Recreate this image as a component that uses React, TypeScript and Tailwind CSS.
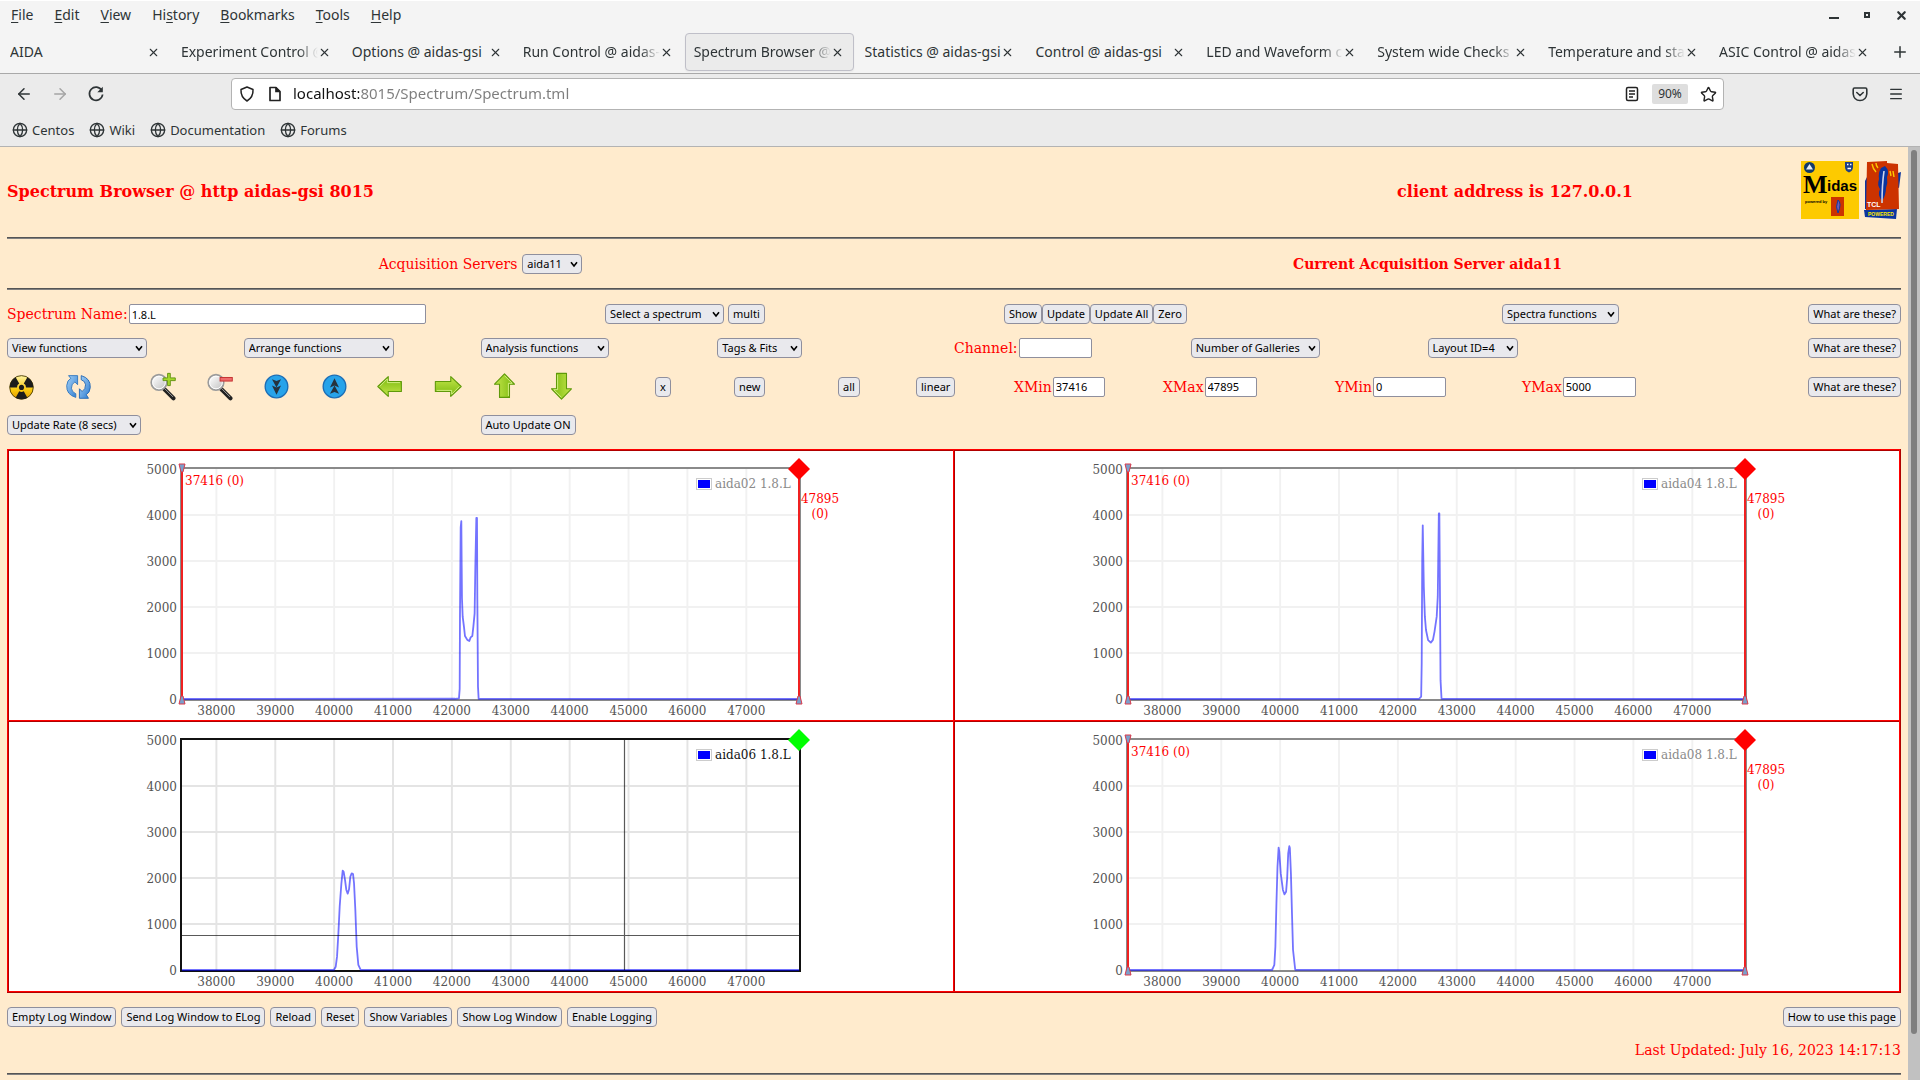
import type { ReactNode } from 'react'
import { ArrowLeft, ArrowRight, Globe, Menu, Plus, Star, X } from 'lucide-react'

const MENUS = ['File', 'Edit', 'View', 'History', 'Bookmarks', 'Tools', 'Help']

const TABS = [
  { title: 'AIDA' },
  { title: 'Experiment Control @', fade: true },
  { title: 'Options @ aidas-gsi' },
  { title: 'Run Control @ aidas-', fade: true },
  { title: 'Spectrum Browser @', fade: true, active: true },
  { title: 'Statistics @ aidas-gsi' },
  { title: 'Control @ aidas-gsi' },
  { title: 'LED and Waveform c', fade: true },
  { title: 'System wide Checks', fade: true },
  { title: 'Temperature and stat', fade: true },
  { title: 'ASIC Control @ aidas', fade: true },
]

const BOOKMARKS = ['Centos', 'Wiki', 'Documentation', 'Forums']

const LOG_BUTTONS = [
  'Empty Log Window',
  'Send Log Window to ELog',
  'Reload',
  'Reset',
  'Show Variables',
  'Show Log Window',
  'Enable Logging',
]

type Spectrum = { name: string; active?: boolean; points: [number, number][] }

const SPECTRA: Spectrum[] = [
  {
    name: 'aida02 1.8.L',
    points: [
      [42052, 5], [42120, 15], [42132, 220], [42137, 1775], [42149, 3730], [42160, 3865], [42166, 2905],
      [42171, 2190], [42183, 1790], [42205, 1570], [42222, 1370], [42262, 1285], [42296, 1260], [42318, 1340],
      [42347, 1370], [42364, 1570], [42386, 1860], [42398, 2880], [42415, 3935], [42426, 3935], [42432, 2170],
      [42443, 270], [42454, 5],
    ],
  },
  {
    name: 'aida04 1.8.L',
    points: [
      [42359, 5], [42395, 50], [42404, 760], [42413, 3020], [42422, 3775], [42440, 2440], [42458, 1790],
      [42477, 1500], [42513, 1280], [42559, 1225], [42595, 1285], [42622, 1465], [42659, 1790], [42677, 2225],
      [42695, 4035], [42704, 4035], [42715, 2190], [42724, 410], [42741, 5],
    ],
  },
  {
    name: 'aida06 1.8.L',
    active: true,
    points: [
      [39998, 5], [40026, 70], [40049, 290], [40072, 800], [40094, 1375], [40123, 1880], [40145, 2160],
      [40162, 2135], [40185, 1955], [40207, 1740], [40230, 1660], [40253, 1755], [40275, 2030], [40298, 2100],
      [40321, 2085], [40338, 1880], [40360, 1305], [40383, 505], [40411, 110], [40451, 5],
    ],
  },
  {
    name: 'aida08 1.8.L',
    points: [
      [39865, 5], [39901, 110], [39919, 505], [39937, 1450], [39955, 2245], [39974, 2660], [39985, 2580],
      [40010, 2100], [40047, 1740], [40074, 1645], [40101, 1700], [40119, 1990], [40137, 2535], [40156, 2690],
      [40165, 2650], [40183, 2100], [40201, 1230], [40219, 435], [40256, 5],
    ],
  },
]

const X_TICKS = [38000, 39000, 40000, 41000, 42000, 43000, 44000, 45000, 46000, 47000]
const Y_TICKS = [0, 1000, 2000, 3000, 4000, 5000]
const XMIN = 37416
const XMAX = 47895

const px = (channel: number) => 61 + ((channel - XMIN) / (XMAX - XMIN)) * 617
const py = (count: number) => 248 - (count / 1000) * 46

function Button({ children }: { children: ReactNode }) {
  return (
    <button className="h-5 shrink-0 rounded border border-[#8f8f9d] bg-[#e9e9ed] px-1 text-[11px] leading-4 whitespace-nowrap text-black">
      {children}
    </button>
  )
}

function Select({ label, width }: { label: string; width: string }) {
  return (
    <span className={`relative inline-block h-5 shrink-0 ${width}`}>
      <select
        aria-label={label}
        className="block h-5 w-full appearance-none rounded border border-[#8f8f9d] bg-[#e9e9ed] pl-1 text-[11px] leading-4 text-black"
      >
        <option>{label}</option>
      </select>
      <svg viewBox="0 0 8 8" className="pointer-events-none absolute top-1.5 right-1 size-2" fill="none" stroke="#000" strokeWidth="1.6">
        <path d="M1 2.2 4 6 7 2.2" />
      </svg>
    </span>
  )
}

function Field({ id, label, value, width }: { id: string; label: string; value: string; width: string }) {
  return (
    <div className="flex items-center gap-px">
      <label htmlFor={id} className="whitespace-nowrap">{label}</label>
      <input
        id={id}
        defaultValue={value}
        className={`h-5 rounded-xs border border-[#8f8f9d] bg-white px-0.5 text-[11px] text-black ${width}`}
      />
    </div>
  )
}

function Rule() {
  return <hr className="h-0.5 border-t border-b border-t-[#555] border-b-[#808080]" />
}

function IconButton({ label, children }: { label: string; children: ReactNode }) {
  return (
    <button aria-label={label} className="block size-[29px]">
      <svg viewBox="0 0 32 32" className="size-full">{children}</svg>
    </button>
  )
}

function GreenArrow({ turn, long }: { turn: number; long?: boolean }) {
  const end = long ? 30.5 : 28
  return (
    <g transform={`rotate(${turn} 16 16)`}>
      <path d={`M16 2 27 13.500H21.500V${end}H10.500V13.500H5Z`} fill="url(#green)" stroke="#5f9a0a" strokeWidth="1.200" strokeLinejoin="round" />
      <path d={`M16 4 24.500 12.500H20.300V${end - 1.5}`} fill="none" stroke="#d6f28a" strokeWidth="1" />
    </g>
  )
}

function Magnifier() {
  return (
    <>
      <path d="M17 19 27 29" stroke="#222" strokeWidth="4.500" strokeLinecap="round" />
      <path d="M17.500 18.500 26.500 27.500" stroke="#aaa" strokeWidth="1" />
      <circle cx="11" cy="11.500" r="8.500" fill="#ececec" stroke="#9b9b9b" strokeWidth="2" />
      <circle cx="11" cy="11.500" r="7" fill="url(#lens)" stroke="#fff" strokeWidth="1" />
    </>
  )
}

function Gradients() {
  return (
    <svg className="absolute size-0" aria-hidden="true">
      <defs>
        <linearGradient id="green" x1="0" x2="1" y1="0" y2="0">
          <stop offset="0" stopColor="#c4e64b" />
          <stop offset="1" stopColor="#79b80c" />
        </linearGradient>
        <linearGradient id="lens" x1="0" x2="1" y1="0" y2="1">
          <stop offset="0" stopColor="#fff" />
          <stop offset="1" stopColor="#c4c4c4" />
        </linearGradient>
        <linearGradient id="refresh" x1="0" x2="1" y1="0" y2="1">
          <stop offset="0" stopColor="#a9d4f7" />
          <stop offset="1" stopColor="#2a7ad0" />
        </linearGradient>
        <linearGradient id="hazard" x1="0" x2="0" y1="0" y2="1">
          <stop offset="0" stopColor="#fff3a0" />
          <stop offset="0.600" stopColor="#f9c80e" />
          <stop offset="1" stopColor="#e09a00" />
        </linearGradient>
      </defs>
    </svg>
  )
}

function Marker({ x, y, down }: { x: number; y: number; down?: boolean }) {
  const d = down ? 'M-3 -4H3L1 4H-1Z' : 'M-3 4H3L1 -4H-1Z'
  return <path d={d} transform={`translate(${x} ${y})`} fill="#7aa0cc" stroke="#d93a4a" strokeWidth="1" />
}

function Plot({ name, active, points }: Spectrum) {
  const line = [[XMIN, 0], ...points, [XMAX, 0]].map(([c, n]) => `${px(c)},${py(n)}`).join(' ')
  const frame = active ? '#111' : '#8a8a8a'
  return (
    <svg viewBox="0 0 720 269" className="mx-auto block w-[720px] font-['DejaVu_Serif',serif] text-xs">
      <g stroke="#000" strokeWidth="2" opacity={active ? 0.1 : 0.05}>
        {X_TICKS.map((t) => <path key={t} d={`M${px(t)} 18V248`} />)}
        {Y_TICKS.slice(1, 5).map((t) => <path key={t} d={`M61 ${py(t)}H678`} />)}
      </g>
      <rect x="60" y="17" width="619" height="232" fill="none" stroke={frame} strokeWidth="2" />
      <polyline points={line} fill="none" stroke="#0000ff" strokeOpacity="0.55" strokeWidth="1.800" strokeLinejoin="round" />

      <g fill="#545454" textAnchor="end">
        {Y_TICKS.map((t) => <text key={t} x="56" y={py(t) + 5}>{t}</text>)}
      </g>
      <g fill="#545454" textAnchor="middle">
        {X_TICKS.map((t) => <text key={t} x={px(t)} y="264">{t}</text>)}
      </g>

      <rect x="575.500" y="27.500" width="15" height="11" fill="#fff" stroke="#ccc" />
      <rect x="577" y="29" width="12" height="8" fill="#00f" />
      <text x="594" y="37" fill={active ? '#111' : '#8a8a8a'}>{name}</text>

      {active ? (
        <path d="M503.500 18V248M61 213.500H678" stroke="#000" strokeOpacity="0.65" strokeWidth="1.200" />
      ) : (
        <g>
          <path d="M61 17V249M678 17V249" stroke="#f02020" strokeWidth="2" />
          <Marker x={61} y={17} down />
          <Marker x={61} y={249} />
          <Marker x={678} y={249} />
          <text x="64" y="34" fill="#f00">{XMIN} (0)</text>
          <text x="699" y="52" fill="#f00" textAnchor="middle">{XMAX}</text>
          <text x="699" y="67" fill="#f00" textAnchor="middle">(0)</text>
        </g>
      )}
      <path d="M678 7 689 18 678 29 667 18Z" fill={active ? '#0f0' : '#f00'} />
    </svg>
  )
}

function Logos() {
  return (
    <div className="flex items-center gap-[5px] pb-1">
      <svg viewBox="0 0 58 58" className="w-[58px]">
        <rect width="58" height="58" fill="#fdca00" />
        <circle cx="8.500" cy="6.500" r="5.500" fill="#123a6b" />
        <path d="M5 8.500 8.500 3 12 8.500Z" fill="#e8eef5" />
        <path d="M44 1H52V6Q52 10 48 11.500 44 10 44 6Z" fill="#1d3f86" />
        <path d="M46 3.500H47.500M49 3.500H50.500M46.500 7.500H50" stroke="#fff" strokeWidth="1.300" />
        <text x="2" y="32" className="font-['Liberation_Serif',serif] text-[26px] font-bold">M</text>
        <text x="26" y="30" className="font-['Liberation_Sans',sans-serif] text-[15px] font-bold">idas</text>
        <text x="4" y="42" className="font-['Liberation_Sans',sans-serif] text-[4px] font-bold">powered by</text>
        <rect x="30" y="36" width="13" height="19" fill="#cc3300" />
        <path d="M37 52Q34 46 37 39 41 42 37 52" fill="#6d5bb5" stroke="#123aa0" />
      </svg>
      <svg viewBox="0 0 37 58" className="w-[37px]">
        <path d="M34 12 37 11 35 27 32 26ZM1 20 4 14V48H1Z" fill="#0a35a0" />
        <path d="M0 49 33 48 32 58 1 56Z" fill="#0a35a0" />
        <path d="M3 1 23 0V2L34 3 35 48 2 49Z" fill="#cc3300" />
        <path d="M8 3Q9 8 12 11M12 2Q12 5 14 7M29 10 30 16M26 10 27 15" stroke="#fdca00" strokeWidth="1.400" fill="none" />
        <path d="M18 40Q13 34 16 28 13 24 15 18 14 12 17 7L21 5Q26 10 23 16 24 22 22 27 22 34 18 40" fill="#0a35a0" />
        <path d="M18 42Q18 24 20 10" stroke="#cfd5ea" strokeWidth="1.600" fill="none" />
        <text x="3" y="46" fill="#fff" className="font-['Liberation_Sans',sans-serif] text-[7px]">TCL</text>
        <text x="4" y="55" fill="#fdea00" className="font-['Liberation_Sans',sans-serif] text-[5px] font-bold">POWERED</text>
      </svg>
    </div>
  )
}

function BrowserChrome() {
  return (
    <header className="font-['Noto_Sans',sans-serif] text-sm text-[#2e3436]">
      <div className="border-t border-white bg-[#f4f4f4]">
        <div className="flex h-7 items-center justify-between pr-3 pl-[11px]">
          <nav className="flex gap-[21px]">
            {MENUS.map((menu) => {
              const key = menu === 'History' ? 2 : 0
              return (
                <button key={menu}>
                  {menu.slice(0, key)}
                  <span className="underline underline-offset-2">{menu[key]}</span>
                  {menu.slice(key + 1)}
                </button>
              )
            })}
          </nav>
          <div className="flex items-center gap-[25px]">
            <button aria-label="Minimize" className="h-2 w-2.5 border-b-2 border-[#2e3436]" />
            <button aria-label="Maximize" className="size-1.5 border-2 border-[#2e3436]" />
            <button aria-label="Close"><X size={13} strokeWidth={4} /></button>
          </div>
        </div>
        <div className="flex h-11 items-center pt-0.5">
          {TABS.map((tab) => (
            <div
              key={tab.title}
              className={`mx-px flex h-[38px] min-w-0 flex-1 items-center rounded border pr-[9px] pl-2 ${
                tab.active ? 'border-[#bfbfc8] bg-[#ebebeb] shadow-xs' : 'border-transparent'
              }`}
            >
              <span
                className={`min-w-0 flex-1 overflow-hidden whitespace-nowrap ${
                  tab.fade ? '[mask-image:linear-gradient(to_left,transparent,black_20px)]' : ''
                }`}
              >
                {tab.title}
              </span>
              <button aria-label="Close tab"><X size={13} strokeWidth={2} /></button>
            </div>
          ))}
          <button aria-label="New tab" className="flex w-10 justify-center"><Plus size={18} strokeWidth={2} /></button>
        </div>
      </div>

      <div className="border-t border-b border-t-[#a9a9a9] border-b-[#b3b3b3] bg-[#ebebeb]">
        <div className="flex h-10 items-center">
          <div className="flex w-[231px] items-center gap-[18px] pl-[15px]">
            <button aria-label="Back"><ArrowLeft size={18} /></button>
            <button aria-label="Forward" className="text-[#a5a5a5]"><ArrowRight size={18} /></button>
            <button aria-label="Reload">
              <svg viewBox="0 0 18 18" className="size-[18px]" fill="none" stroke="currentColor" strokeWidth="1.700">
                <path d="M14.800 5.500A6.600 6.600 0 1 0 15.600 9.500" />
                <path d="M15.800 1.800V7.300H10.300Z" fill="currentColor" stroke="none" />
              </svg>
            </button>
          </div>
          <div className="flex h-8 flex-1 items-center rounded border border-[#b3b3b3] bg-white pr-1.5 pl-[7px]">
            <svg viewBox="0 0 16 16" className="size-4" fill="none" stroke="#222" strokeWidth="1.500">
              <path d="M8 1 14 3.500Q14.500 11 8 15 1.500 11 2 3.500Z" strokeLinejoin="round" />
            </svg>
            <svg viewBox="0 0 16 16" className="ml-3 size-4" fill="none" stroke="#222" strokeWidth="1.700">
              <path d="M3 1.500H9L13 5.500V14.500H3Z" strokeLinejoin="round" />
              <path d="M9 1.500V5.500H13" fill="#222" />
            </svg>
            <input
              aria-label="Address"
              defaultValue="localhost:8015/Spectrum/Spectrum.tml"
              className="ml-2.5 min-w-0 flex-1 bg-[linear-gradient(to_right,#111_66px,#7d7d7d_66px)] bg-clip-text text-[15px] text-transparent"
            />
            <svg viewBox="0 0 16 16" className="size-4" fill="none" stroke="#222" strokeWidth="1.500">
              <rect x="2.500" y="1.500" width="11" height="13" rx="1.500" />
              <path d="M5 5H11M5 8H11M5 11H9" />
            </svg>
            <button className="mx-3 h-5 w-9 rounded-xs bg-[#dedede] text-xs">90%</button>
            <button aria-label="Bookmark this page" className="text-[#222]"><Star size={17} strokeWidth={2} /></button>
          </div>
          <div className="flex w-[196px] items-center justify-end gap-5 pr-4">
            <button aria-label="Save to Pocket">
              <svg viewBox="0 0 16 16" className="size-4" fill="none" stroke="currentColor" strokeWidth="1.600">
                <path d="M2.500 2H13.500Q14.800 2 14.800 3.500V8Q14 14.500 8 14.500 2 14.500 1.200 8V3.500Q1.200 2 2.500 2Z" />
                <path d="M4.800 6.500 8 9.500 11.200 6.500" strokeLinecap="round" />
              </svg>
            </button>
            <button aria-label="Open menu"><Menu size={16} strokeWidth={2} /></button>
          </div>
        </div>
        <nav className="flex h-8 items-center gap-[15px] pl-3 text-[13px]">
          {BOOKMARKS.map((name) => (
            <a key={name} href="#" className="flex items-center gap-1">
              <Globe size={16} strokeWidth={2} />
              {name}
            </a>
          ))}
        </nav>
      </div>
    </header>
  )
}

export default function App() {
  return (
    <div className="flex min-h-screen flex-col bg-[#ffebcd]">
      <BrowserChrome />
      <div className="flex flex-1">
        <main className="min-w-0 flex-1 px-[7px] font-['DejaVu_Serif',serif] text-sm text-[#f00] [&_button]:font-['Noto_Sans',sans-serif] [&_input]:font-['Noto_Sans',sans-serif] [&_select]:font-['Noto_Sans',sans-serif]">
          <Gradients />
          <div className="grid h-[90px] grid-cols-[1224fr_568fr_102fr] items-center text-base font-bold">
            <h1>Spectrum Browser @ http aidas-gsi 8015</h1>
            <p className="text-center">client address is 127.0.0.1</p>
            <div className="flex justify-end"><Logos /></div>
          </div>
          <Rule />
          <div className="grid h-[49px] grid-cols-2 items-center">
            <div className="flex items-center justify-center gap-[5px]">
              Acquisition Servers
              <Select label="aida11" width="w-[60px]" />
            </div>
            <strong className="text-center">Current Acquisition Server aida11</strong>
          </div>
          <Rule />

          <div className="flex flex-col gap-3.5 pt-3.5">
            <div className="grid grid-cols-[598fr_399fr_498fr_304fr_95fr]">
              <Field id="spectrum-name" label="Spectrum Name:" value="1.8.L" width="w-[297px]" />
              <div className="flex gap-1">
                <Select label="Select a spectrum" width="w-[119px]" />
                <Button>multi</Button>
              </div>
              <div className="flex">
                <Button>Show</Button>
                <Button>Update</Button>
                <Button>Update All</Button>
                <Button>Zero</Button>
              </div>
              <Select label="Spectra functions" width="w-[117px]" />
              <div className="flex justify-end"><Button>What are these?</Button></div>
            </div>

            <div className="grid grid-cols-8">
              <Select label="View functions" width="w-[140px]" />
              <Select label="Arrange functions" width="w-[150px]" />
              <Select label="Analysis functions" width="w-[128px]" />
              <Select label="Tags &amp; Fits" width="w-[85px]" />
              <Field id="channel" label="Channel:" value="" width="w-[73px]" />
              <Select label="Number of Galleries" width="w-[129px]" />
              <Select label="Layout ID=4" width="w-[90px]" />
              <div className="flex justify-end"><Button>What are these?</Button></div>
            </div>

            <div className="grid h-[29px] grid-cols-[57fr_85fr_57fr_56fr_58fr_56fr_58fr_56fr_57fr_108fr_79fr_104fr_78fr_98fr_149fr_172fr_187fr_284fr_95fr] items-center">
              <IconButton label="Radiation">
                <circle cx="16" cy="17" r="13" fill="url(#hazard)" stroke="#4a3c00" strokeWidth="1" />
                <path d="M13.500 12.700 9.500 5.700A13 13 0 0 1 22.500 5.700L18.500 12.700A5 5 0 0 0 13.500 12.700ZM21 17H29A13 13 0 0 1 22.500 28.300L18.500 21.300A5 5 0 0 0 21 17ZM11 17H3A13 13 0 0 0 9.500 28.300L13.500 21.300A5 5 0 0 1 11 17Z" fill="#1c1c1c" transform="rotate(180 16 17)" />
                <circle cx="16" cy="17" r="2.800" fill="#1c1c1c" />
              </IconButton>
              <IconButton label="Refresh">
                <path d="M13 28Q2.500 25 3 15 3.500 9 7.500 7L5 4H15V14L12 11Q8 13 8.200 18 8.500 22 13 24Z" fill="url(#refresh)" stroke="#2f76bf" strokeWidth="1" />
                <path d="M19 4Q29.500 7 29 17 28.500 23 24.500 25L27 29H17V18.500L20 21.500Q24 19 23.800 14 23.500 10 19 8.500Z" fill="url(#refresh)" stroke="#1f66b5" strokeWidth="1" />
              </IconButton>
              <IconButton label="Zoom in">
                <Magnifier />
                <path d="M20.500 1.500H23.500V6.500H29V9.500H23.500V15H20.500V9.500H15.500V6.500H20.500Z" fill="#a5d82b" stroke="#5f8f0c" />
              </IconButton>
              <IconButton label="Zoom out">
                <Magnifier />
                <rect x="15.500" y="6" width="13.500" height="4" fill="#ef6b6b" stroke="#c12a2a" />
              </IconButton>
              <IconButton label="Page down">
                <circle cx="16" cy="16" r="12.500" fill="#27a3ea" stroke="#1c6db5" strokeWidth="1.500" />
                <path d="M11 8 16 10 21 8 16 17ZM11 15 16 17 21 15 16 25Z" fill="#26323e" />
              </IconButton>
              <IconButton label="Page up">
                <circle cx="16" cy="16" r="12.500" fill="#27a3ea" stroke="#1c6db5" strokeWidth="1.500" />
                <path d="M11 24 16 22 21 24 16 15ZM11 17 16 15 21 17 16 7Z" fill="#26323e" />
              </IconButton>
              <IconButton label="Left"><GreenArrow turn={-90} /></IconButton>
              <IconButton label="Right"><GreenArrow turn={90} long /></IconButton>
              <IconButton label="Up"><GreenArrow turn={0} /></IconButton>
              <IconButton label="Down"><GreenArrow turn={180} long /></IconButton>
              <div className="flex"><Button>x</Button></div>
              <div className="flex"><Button>new</Button></div>
              <div className="flex"><Button>all</Button></div>
              <div className="flex"><Button>linear</Button></div>
              <Field id="xmin" label="XMin" value="37416" width="w-[52px]" />
              <Field id="xmax" label="XMax" value="47895" width="w-[52px]" />
              <Field id="ymin" label="YMin" value="0" width="w-[73px]" />
              <Field id="ymax" label="YMax" value="5000" width="w-[73px]" />
              <div className="flex justify-end"><Button>What are these?</Button></div>
            </div>

            <div className="grid grid-cols-4">
              <Select label="Update Rate (8 secs)" width="w-[134px]" />
              <div className="flex"><Button>Auto Update ON</Button></div>
            </div>

            <section className="grid grid-cols-2 gap-px border-r border-b border-[#b00000] bg-[#f00] p-px">
              {SPECTRA.map((spectrum) => (
                <div key={spectrum.name} className="border-t border-l border-[#b00000] bg-white">
                  <Plot {...spectrum} />
                </div>
              ))}
            </section>

            <div className="flex justify-between">
              <div className="flex gap-[5px]">
                {LOG_BUTTONS.map((label) => <Button key={label}>{label}</Button>)}
              </div>
              <Button>How to use this page</Button>
            </div>
            <p className="text-right leading-[18px]">Last Updated: July 16, 2023 14:17:13</p>
            <Rule />
          </div>
        </main>
        <div className="flex w-3 flex-col bg-[#c1c1c1] px-[3px] pt-[3px]">
          <div className="flex-[19] rounded-full bg-[#7f7f7f]" />
          <div className="flex-1" />
        </div>
      </div>
    </div>
  )
}
